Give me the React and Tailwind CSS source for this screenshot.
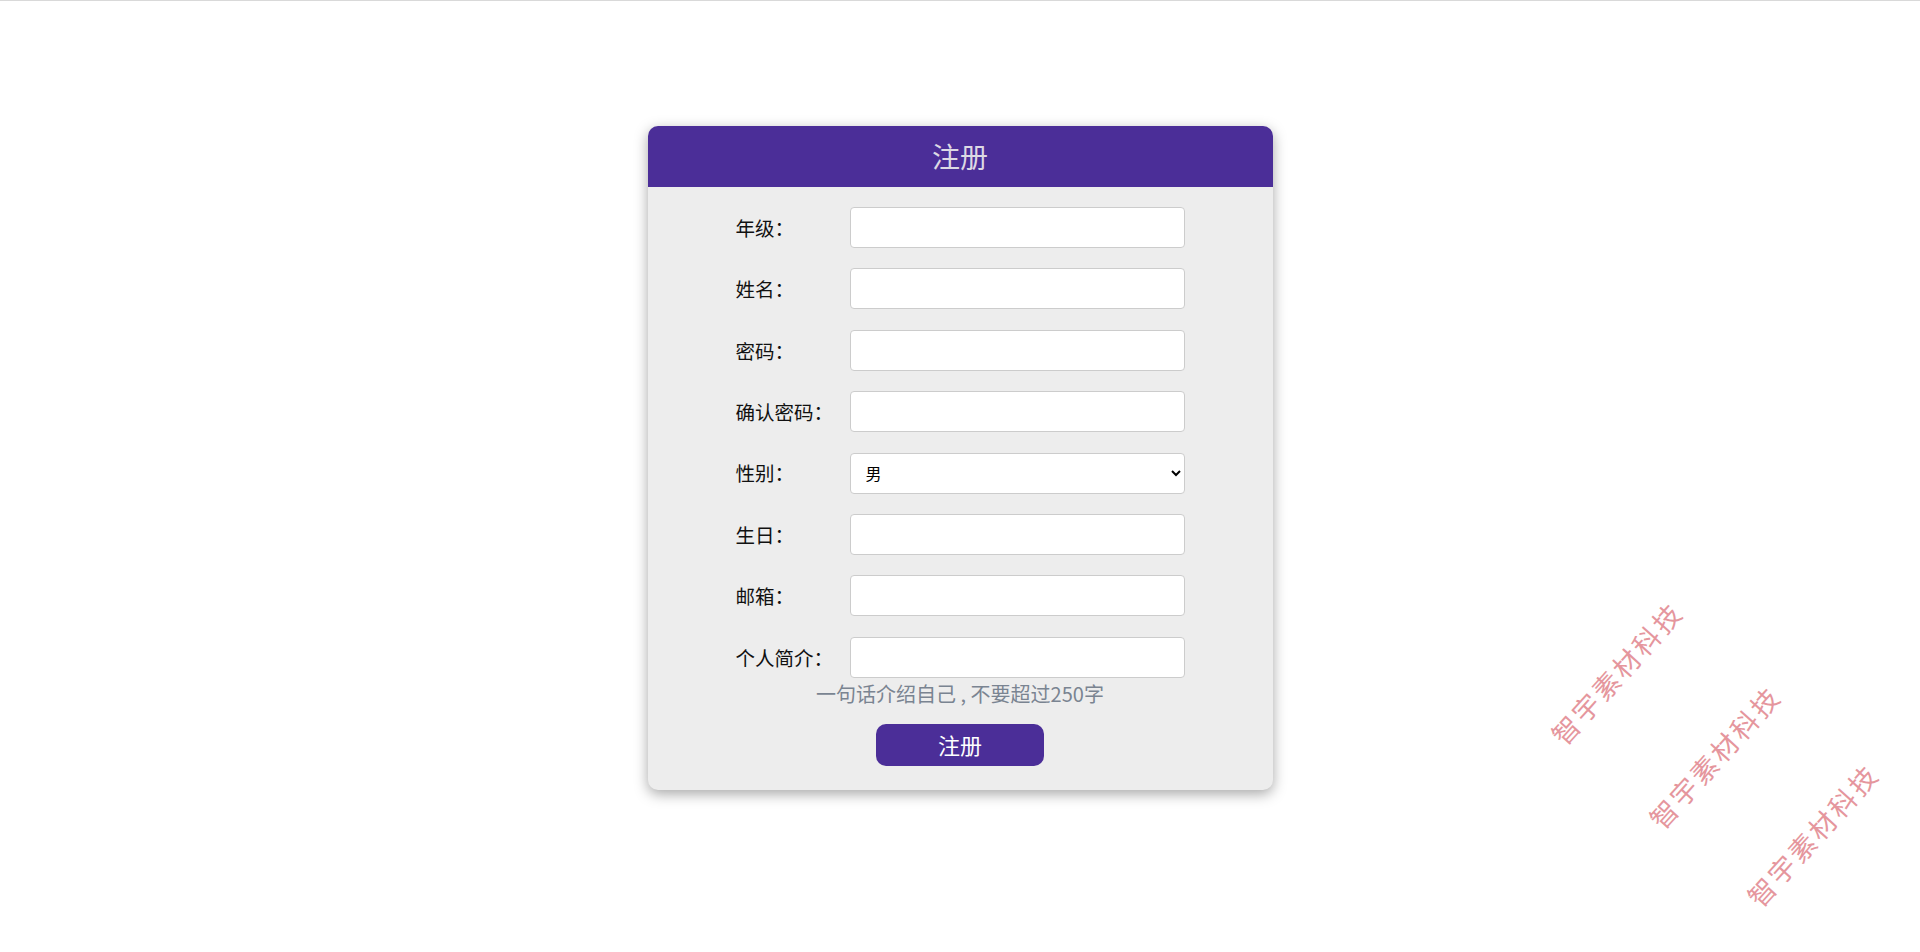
import { useState } from "react";

const fields = [
  { name: "grade", label: "年级：" },
  { name: "name", label: "姓名：" },
  { name: "password", label: "密码：", type: "password" },
  { name: "confirm", label: "确认密码：", type: "password" },
  { name: "gender", label: "性别：", select: true },
  { name: "birthday", label: "生日：" },
  { name: "email", label: "邮箱：" },
  { name: "intro", label: "个人简介：" },
];

const marks = [
  "left-[1527px] top-[652px]",
  "left-[1625px] top-[736px]",
  "left-[1723px] top-[814px]",
];

const App = () => {
  const [form, setForm] = useState({ gender: "男" });

  const handleChange = (e) => {
    const { name, value } = e.target;
    setForm((prev) => ({ ...prev, [name]: value }));
  };

  return (
    <div
      className="relative min-h-[952px] overflow-hidden bg-white border-t border-[#d9d9d9]"
      style={{ fontFamily: '"Noto Sans CJK SC", "Noto Sans", sans-serif' }}
    >
      <form
        onSubmit={(e) => e.preventDefault()}
        className="mx-auto mt-[125px] w-[625px] rounded-[10px] bg-[#ededed] shadow-[0_4px_14px_rgba(0,0,0,0.35)] overflow-hidden"
      >
        <h2 className="h-[61px] bg-[#4b2e98] text-center text-[28px] leading-[61px] text-[#dcd9e4]">
          注册
        </h2>

        <div className="mt-[20px] flex flex-col gap-[20.4px]">
          {fields.map((f) => (
            <div key={f.name} className="flex items-center justify-center">
              <label className="w-[114px] text-[19.5px] text-[#111]">{f.label}</label>
              {f.select ? (
                <select
                  name={f.name}
                  value={form[f.name]}
                  onChange={handleChange}
                  className="h-[41px] w-[335px] rounded-[4px] border border-[#cccccc] bg-white pl-[11px] pr-[4px] text-[16px] text-black"
                >
                  <option value="男">男</option>
                  <option value="女">女</option>
                </select>
              ) : (
                <input
                  name={f.name}
                  type={f.type || "text"}
                  value={form[f.name] || ""}
                  onChange={handleChange}
                  className="h-[41px] w-[335px] rounded-[4px] border border-[#cccccc] bg-white px-2 text-[16px] outline-none"
                />
              )}
            </div>
          ))}
        </div>

        <p className="mt-[3px] text-center text-[20px] leading-[26px] text-[#7a8491]">
          一句话介绍自己 , 不要超过250字
        </p>

        <div className="mt-[17px] pb-[24px] flex justify-center">
          <button
            type="submit"
            className="h-[42px] w-[168px] rounded-[10px] bg-[#4b2e98] text-[22px] text-white"
          >
            注册
          </button>
        </div>
      </form>

      {marks.map((pos) => (
        <div
          key={pos}
          className={`absolute ${pos} -rotate-[48deg] whitespace-nowrap text-[27px] tracking-[3px] text-[#e5969d]`}
        >
          智宇素材科技
        </div>
      ))}
    </div>
  );
};

export default App;
